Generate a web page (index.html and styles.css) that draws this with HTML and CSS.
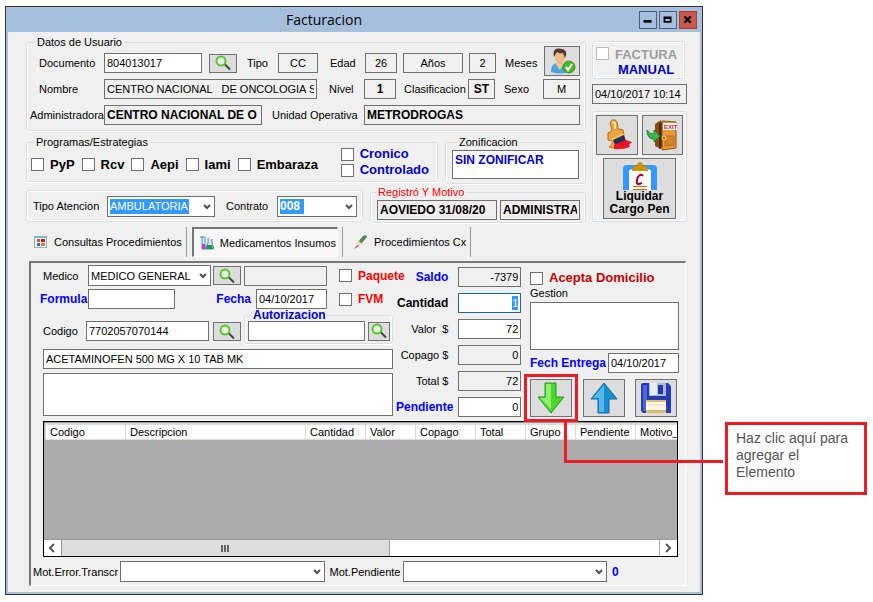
FILE: index.html
```html
<!DOCTYPE html>
<html lang="es">
<head>
<meta charset="utf-8">
<title>Facturacion</title>
<link rel="stylesheet" href="styles.css">
</head>
<body>
<svg class="defs" aria-hidden="true">
  <symbol id="lens" viewBox="0 0 18 16"><path d="M10.500 9L16 14.500" stroke="#444" stroke-width="2" fill="none"/><circle cx="7" cy="6" r="4.500" fill="#e6f3e2" stroke="#5bc236" stroke-width="2"/></symbol>
  <symbol id="chev" viewBox="0 0 8 6"><path d="M1 1L4 4L7 1" fill="none" stroke="#505050" stroke-width="2"/></symbol>
</svg>
<div class="stage">
  <main class="window">
    <header class="titlebar">
      <h1>Facturacion</h1>
      <div class="winbtns">
        <button type="button" aria-label="Minimizar"><svg viewBox="0 0 18 18"><path d="M4 9h9v3H4z"/></svg></button>
        <button type="button" aria-label="Maximizar"><svg viewBox="0 0 18 18"><path d="M4 5h9v7H4zM6 8v2h5V8z" fill-rule="evenodd"/></svg></button>
        <button type="button" class="close" aria-label="Cerrar"><svg viewBox="0 0 18 18"><path d="M5 5l7 7M12 5l-7 7" stroke="#000" stroke-width="2.500"/></svg></button>
      </div>
    </header>
    <div class="content">
      <div class="top">
        <div class="left">
          <fieldset class="user">
            <legend>Datos de Usuario</legend>
            <div class="row">
              <label class="w-main" for="doc">Documento</label><input id="doc" class="w-doc" value="804013017">
              <button type="button" class="find" aria-label="Buscar documento"><svg><use href="#lens"/></svg></button>
              <label class="w-tipo" for="tipo">Tipo</label><input id="tipo" class="ro center grow" value="CC" readonly>
              <label class="w-edad" for="edad">Edad</label><input id="edad" class="ro center w-small" value="26" readonly>
              <input class="ro center w-anos" aria-label="Unidad de edad" value="Años" readonly>
              <input id="meses" class="ro center w-mes" value="2" readonly><label class="w-meses" for="meses">Meses</label>
              <button type="button" class="person" aria-label="Usuario"><svg viewBox="0 0 28 28"><path d="M3 25c0-7 3-9 8-9s9 2 9 9q-8 3-17 0z" fill="#49a3dc"/><path d="M9 15h5l1 3-3 5-4-5z" fill="#f4c796"/><ellipse cx="12" cy="10" rx="5" ry="7" fill="#edb98a"/><path d="M6 10C4 1 10 1 14 2c5 1 5 5 3 9l-2-5q-3 1-6-1z" fill="#51382e"/><circle cx="21" cy="20" r="6" fill="#4cb526" stroke="#3a961c"/><path d="M18 20l2 3 4-6" fill="none" stroke="#fff" stroke-width="2"/></svg></button>
            </div>
            <div class="row">
              <label class="w-main" for="nom">Nombre</label><input id="nom" class="ro grow" value="CENTRO NACIONAL   DE ONCOLOGIA SA" readonly>
              <label class="w-edad" for="nivel">Nivel</label><input id="nivel" class="ro center b w-small" value="1" readonly>
              <label class="w-clas" for="clas">Clasificacion</label><input id="clas" class="ro center b w-mes" value="ST" readonly>
              <label class="w-meses" for="sexo">Sexo</label><input id="sexo" class="ro center w-sexo" value="M" readonly>
            </div>
            <div class="row">
              <label class="w-adm" for="adm">Administradora</label><input id="adm" class="ro b w-admin" value="CENTRO NACIONAL DE O" readonly>
              <label class="w-uni" for="uni">Unidad Operativa</label><input id="uni" class="ro b grow" value="METRODROGAS" readonly>
            </div>
          </fieldset>
          <div class="pair">
            <fieldset class="programs grow">
              <legend>Programas/Estrategias</legend>
              <div class="checks">
                <label><input type="checkbox">PyP</label>
                <label><input type="checkbox">Rcv</label>
                <label><input type="checkbox">Aepi</label>
                <label><input type="checkbox">Iami</label>
                <label><input type="checkbox">Embaraza</label>
              </div>
              <div class="stack navy">
                <label><input type="checkbox">Cronico</label>
                <label><input type="checkbox">Controlado</label>
              </div>
            </fieldset>
            <fieldset class="zone">
              <legend>Zonificacion</legend>
              <textarea class="navy b" aria-label="Zonificacion">SIN ZONIFICAR</textarea>
            </fieldset>
          </div>
          <div class="pair low">
            <div class="box attention grow">
              <label class="w-aten" for="aten">Tipo Atencion</label>
              <span class="sel grow"><select id="aten" class="hl"><option>AMBULATORIA</option></select><svg><use href="#chev"/></svg></span>
              <label class="w-cont" for="cont">Contrato</label>
              <span class="sel w-contrato"><select id="cont" class="hl short b"><option>008</option></select><svg><use href="#chev"/></svg></span>
            </div>
            <fieldset class="registry">
              <legend>Registró Y Motivo</legend>
              <div class="row">
                <input class="ro pink b grow" aria-label="Registró" value="AOVIEDO 31/08/20" readonly>
                <input class="ro pink b w-motivo" aria-label="Motivo" value="ADMINISTRADOR" readonly>
              </div>
            </fieldset>
          </div>
        </div>
        <aside class="side">
          <div class="box manual">
            <input type="checkbox" id="manual" disabled>
            <label for="manual"><span class="dim">FACTURA</span><span class="navy">MANUAL</span></label>
          </div>
          <input class="ro stamp" aria-label="Fecha y hora" value="04/10/2017 10:14" readonly>
          <div class="box tools">
            <button type="button" aria-label="Limpiar"><svg viewBox="0 0 32 32"><path d="M8 28q4-3 4-7l6-1 6 4q-5 5-9 4-3 2-7 0z" fill="#f0a43c" stroke="#c47a17"/><path d="M9 4q1-4 5-3 3 1 3 9l5 1 1 5-12 6-4-1V14q4-1 4-3z" fill="#f0a43c" stroke="#b66a12"/><path d="M11 4q2-2 3 0v6" stroke="#ffe0a0" fill="none" stroke-width="2"/><path d="M10 20l12-6 2 3-12 6z" fill="#e9c75b"/><path d="M12 21l11-5 2 6-11 4z" fill="#2c2b55"/><path d="M13 26l12-5 6 2-3 3 1 2q-8 3-16 2z" fill="#e8152a"/></svg></button>
            <button type="button" aria-label="Salir"><svg viewBox="0 0 32 32"><path d="M9 5l6-4v29l-6-3z" fill="#8a4b0f"/><path d="M13 5l4-3v26l-4 2z" fill="#4c2a0b"/><path d="M16 2l14 1v26l-14 2z" fill="#e69a37" stroke="#93530e"/><path d="M19 17h9v9l-9 1z" fill="#d4842b" stroke="#b96d1d"/><path d="M17 4h14v7H17z" fill="#fff"/><text x="18" y="10" font-size="6" font-weight="700" font-family="Liberation Sans, sans-serif" fill="#e00d1b" aria-hidden="true">EXIT</text><circle cx="18" cy="19" r="2" fill="#bc6a16" stroke="#fbd28a"/><path d="M1 11q3 5 7 4v-4l6 6-6 6v-3q-7 0-7-9z" fill="#3db54a" stroke="#208431"/></svg></button>
            <button type="button" class="settle"><svg viewBox="0 0 36 28"><path d="M1 28V7q0-4 4-4h26q4 0 4 4v21h-6V8H7v20z" fill="#3597ff"/><path d="M7 28V10q0-3 4-3h14q4 0 4 3v18z" fill="#fff"/><path d="M10 9q0-5 5-5 0-4 3-4t3 4q5 0 5 5z" fill="#cf9500"/><path d="M21 14q-2-3-5 1-3 7 1 7l3-1" fill="none" stroke="#a00024" stroke-width="2"/><path d="M11 24.500h14M11 27.500h14" stroke="#cf6a10"/></svg><span>Liquidar<br>Cargo Pen</span></button>
          </div>
        </aside>
      </div>
      <nav class="tabs">
        <button type="button"><svg viewBox="0 0 14 14"><path d="M0 1h13v12H0z" fill="#7fb6cc"/><path d="M1 3h11v9H1z" fill="#fff"/><path d="M3 4h3v3H3z" fill="#dc4b39"/><path d="M7 4h4v3H7z" fill="#c0192d"/><path d="M3 8h3v3H3z" fill="#2f6bad"/><path d="M7 8h4v3H7z" fill="#ef7440"/></svg>Consultas Procedimientos</button>
        <button type="button" class="active"><svg viewBox="0 0 14 14"><path d="M0 1h5M2 1v12h3V1" fill="#eaf4ff" stroke="#3787dd"/><path d="M2 8h3v5H2z" fill="#c83ac9"/><path d="M8 2v5l-3 6h9l-2-6V3" fill="#cde4fb" stroke="#6d83b2"/><path d="M7 9h5l1 4H6z" fill="#159b4a"/></svg>Medicamentos Insumos</button>
        <button type="button"><svg viewBox="0 0 14 14"><path d="M9 1q4-2 4 1L7 9 4 7z" fill="#4c8d50"/><path d="M5 6l3 3-3 2-2-2z" fill="#f0d5b2"/><path d="M0 14l3-4 2 1z" fill="#e9493e"/></svg>Procedimientos Cx</button>
      </nav>
      <section class="panel">
        <div class="form">
          <div class="entry">
            <div class="row">
              <label class="w-med" for="med">Medico</label>
              <span class="sel w-medico"><select id="med"><option>MEDICO GENERAL</option></select><svg><use href="#chev"/></svg></span>
              <button type="button" class="find" aria-label="Buscar medico"><svg><use href="#lens"/></svg></button>
              <input class="ro grow" aria-label="Nombre del medico" readonly>
              <label class="tick red"><input type="checkbox">Paquete</label>
            </div>
            <div class="row">
              <label class="w-med cap" for="form">Formula</label><input id="form" class="w-formula">
              <label class="w-fecha cap grow" for="fecha">Fecha</label><input id="fecha" class="w-date" value="04/10/2017">
              <label class="tick red"><input type="checkbox">FVM</label>
            </div>
            <div class="row code">
              <label class="w-cod" for="cod">Codigo</label><input id="cod" class="w-codigo" value="7702057070144">
              <button type="button" class="find" aria-label="Buscar codigo"><svg><use href="#lens"/></svg></button>
              <fieldset class="auth grow">
                <legend class="navy">Autorizacion</legend>
                <div class="row"><input class="grow" aria-label="Autorizacion"><button type="button" class="find slim" aria-label="Buscar autorizacion"><svg><use href="#lens"/></svg></button></div>
              </fieldset>
            </div>
            <input class="wide" aria-label="Descripcion" value="ACETAMINOFEN 500 MG X 10 TAB MK">
            <textarea class="notes" aria-label="Observaciones"></textarea>
          </div>
          <div class="amounts">
            <label class="cap" for="saldo">Saldo</label><input id="saldo" class="ro" value="-7379" readonly>
            <label class="cap black" for="cant">Cantidad</label><input id="cant" class="picked" value="1">
            <label for="valor">Valor&nbsp; $</label><input id="valor" value="72">
            <label for="copago">Copago $</label><input id="copago" class="ro" value="0" readonly>
            <label for="total">Total $</label><input id="total" class="ro" value="72" readonly>
            <label class="cap out" for="pend">Pendiente</label><input id="pend" value="0">
          </div>
          <div class="delivery">
            <label class="tick dark"><input type="checkbox">Acepta Domicilio</label>
            <label for="gest">Gestion</label>
            <textarea id="gest"></textarea>
            <div class="row"><label class="cap grow" for="entrega">Fech Entrega</label><input id="entrega" class="w-date" value="04/10/2017"></div>
            <div class="actions">
              <div class="target">
                <button type="button" aria-label="Agregar"><svg viewBox="0 0 32 34"><path d="M10 2h11v14h8L16 32 3 16h7z" fill="#48d72b" stroke="#27941a"/><path d="M11 3h5v25L5 17h6z" fill="#8cf06d"/></svg></button>
                <span class="link"></span>
              </div>
              <button type="button" aria-label="Quitar"><svg viewBox="0 0 32 34"><path d="M10 32h11V18h8L16 2 3 18h7z" fill="#168ed4" stroke="#1268a3"/><path d="M11 31h5V4L5 17h6z" fill="#55b9ed"/></svg></button>
              <button type="button" aria-label="Guardar"><svg viewBox="0 0 32 34"><path d="M1 4q0-2 2-2h25l3 3v27H3l-2-2z" fill="#233db4"/><path d="M3 4h4v26H3z" fill="#4968d8"/><path d="M9 2h17v13H9z" fill="#aeb8d0"/><path d="M10 2h7v12h-7z" fill="#e9edf7"/><path d="M18 4h5v9h-5z" fill="#263aa5"/><path d="M6 19h20v13H6z" fill="#fff8e8"/><path d="M6 19h20v2H6zM6 29h20v3H6z" fill="#e4b96c"/><path d="M8 24h16" stroke="#ddd3bd"/></svg></button>
            </div>
          </div>
        </div>
        <div class="gridview">
          <div class="cells">
            <table>
              <colgroup><col class="c80"><col class="c180"><col class="c60"><col class="c50"><col class="c60"><col class="c50"><col class="c50"><col class="c60"><col></colgroup>
              <thead><tr><th>Codigo</th><th>Descripcion</th><th>Cantidad</th><th>Valor</th><th>Copago</th><th>Total</th><th>Grupo</th><th>Pendiente</th><th>Motivo_</th></tr></thead>
            </table>
          </div>
          <div class="scroll">
            <button type="button" aria-label="Izquierda"><svg viewBox="0 0 16 16"><path d="M10 4L6 8l4 4" fill="none" stroke="#555" stroke-width="2"/></svg></button>
            <div class="track"><div class="thumb"><i></i><i></i><i></i></div></div>
            <button type="button" aria-label="Derecha"><svg viewBox="0 0 16 16"><path d="M6 4l4 4-4 4" fill="none" stroke="#555" stroke-width="2"/></svg></button>
          </div>
        </div>
        <div class="row reasons">
          <label class="w-err" for="err">Mot.Error.Transcr</label>
          <span class="sel grow"><select id="err"><option></option></select><svg><use href="#chev"/></svg></span>
          <label class="w-mot" for="mot">Mot.Pendiente</label>
          <span class="sel grow"><select id="mot"><option></option></select><svg><use href="#chev"/></svg></span>
          <output class="count">0</output>
        </div>
      </section>
    </div>
  </main>
  <p class="callout">Haz clic aquí para agregar el Elemento</p>
</div>
</body>
</html>
```
FILE: styles.css
```css
* { box-sizing: border-box; }
body { margin: 0; background: #fff; color: #000; font: 11px/14px "Liberation Sans", sans-serif; }
.defs { display: none; }
.stage { display: grid; grid-template-columns: minmax(0, 1fr) 142px; gap: 22px; align-items: start; padding: 6px 6px 7px 5px; }

.window { min-width: 0; background: #f0f0f0; border: 1px solid #333; box-shadow: inset 0 0 0 2px #a6bfdd; padding: 0 2px 2px; }
.titlebar { display: flex; align-items: center; height: 25px; margin: 0 -2px; padding: 0 5px 0 3px; background: #a6bfdd; }
h1 { flex: 1; margin: 0; text-align: center; font: 14px/24px "Open Sans", sans-serif; }
.winbtns { display: flex; gap: 2px; }
.winbtns button { width: 18px; height: 18px; padding: 0; background: #a6bfdd; border: 1px solid #4c5f7a; }
.winbtns .close { background: #c75a4b; border-color: #a34237; }
.winbtns svg { display: block; width: 16px; height: 16px; }

.content { padding: 4px 13px 6px 18px; }
.top { display: grid; grid-template-columns: minmax(0, 1fr) 95px; gap: 6px; }
.row { display: flex; align-items: center; }
.grow { flex: 1; min-width: 0; }
label { white-space: nowrap; flex: none; }
label.grow { flex: 1; }

input, textarea, select { font: inherit; color: #000; background: #fff; border: 1px solid #707070; border-radius: 0; margin: 0; outline: 0; }
input { height: 20px; padding: 0 2px; min-width: 0; }
textarea { display: block; width: 100%; resize: none; padding: 3px; overflow: hidden; }
.ro { background: #f0f0f0; }
.pink { background: #f2eeee; }
.center { text-align: center; }
.b { font-weight: 700; font-size: 12px; }
input[type="checkbox"] { appearance: none; flex: none; width: 13px; height: 13px; padding: 0; background: #fff; border: 1px solid #707070; }
button { font: inherit; color: #000; background: #ddd; border: 1px solid #707070; border-radius: 0; padding: 0; flex: none; }
.find { width: 28px; height: 19px; }
.find svg { display: block; width: 18px; height: 16px; margin: 0 auto; }
.slim { width: 22px; }

.sel { position: relative; display: block; height: 21px; }
.sel select { display: block; appearance: none; width: 100%; height: 100%; padding: 0 18px 0 2px; }
.sel svg { position: absolute; right: 4px; top: 8px; width: 8px; height: 6px; pointer-events: none; }
select.hl { color: #fff; background: linear-gradient(#3399ff, #3399ff) 2px 2px / 79px 15px no-repeat #fff; }
select.short { background-size: 24px 15px; }

fieldset { min-width: 0; margin: 0; padding: 0; border: 1px solid #d5dfe5; border-radius: 3px; box-shadow: inset 1px 0 #fff, inset -1px 0 #fff, 0 1px #fff; }
legend { margin-left: 5px; padding: 0 2px; line-height: 12px; }
.box { border: 1px solid #d5dfe5; border-radius: 3px; box-shadow: inset 0 0 0 1px #fff; }
.navy { color: #0000c8; }

.user { padding: 5px 5px 5px 3px; }
.user .row + .row { margin-top: 6px; }
.w-main { width: 74px; padding-left: 9px; }
.w-adm { width: 74px; }
.w-doc { width: 98px; margin-right: 7px; }
.w-tipo { width: 41px; padding-left: 10px; }
.w-edad { width: 47px; padding-left: 12px; }
.w-small { width: 32px; }
.w-anos { width: 60px; margin: 0 6px; }
.w-mes { width: 27px; }
.w-meses { width: 48px; padding-left: 9px; }
.person { width: 36px; height: 30px; margin: -7px 0 -3px; }
.person svg { display: block; width: 28px; height: 28px; margin: auto; }
.w-clas { width: 72px; padding-left: 8px; }
.w-sexo { width: 37px; }
.w-admin { width: 158px; }
.w-uni { width: 102px; padding-left: 10px; }

.pair { display: flex; align-items: start; gap: 7px; margin-top: 5px; }
.programs { display: flex; align-items: center; justify-content: space-between; height: 46px; padding: 0 8px 0 4px; }
.programs legend { margin-left: 3px; }
.checks { display: flex; gap: 7px; }
.checks label, .stack label, .tick { display: flex; align-items: center; gap: 6px; font: bold 13px/16px "Liberation Sans", sans-serif; }
.stack { margin-top: -5px; }
.zone { width: 141px; height: 48px; padding: 2px 6px; }
.zone textarea { height: 29px; padding: 2px; line-height: 14px; }
.low { margin-top: 2px; }
.attention { display: flex; align-items: center; height: 32px; margin-top: 4px; padding: 0 5px 0 6px; }
.w-aten { width: 74px; }
.w-cont { width: 62px; padding-left: 11px; }
.w-contrato { width: 80px; }
.registry { width: 216px; padding: 2px 5px 2px 6px; }
.registry legend { color: #f00; margin-left: -1px; }
.registry .row { gap: 3px; }
.w-motivo { width: 80px; }

.side { display: flex; flex-direction: column; padding-top: 5px; }
.manual { display: flex; gap: 6px; height: 38px; padding: 5px 3px; margin-right: 2px; font: bold 13px/15px "Liberation Sans", sans-serif; }
.manual span { display: block; text-align: center; }
.dim { color: #9d9d9d; }
.manual input { border-color: #bbb; }
.stamp { width: 100%; margin: 5px 0 7px; }
.tools { display: grid; grid-template-columns: 1fr 1fr; gap: 3px 4px; padding: 3px 3px 2px; }
.tools button { height: 40px; }
.tools svg { display: block; width: 32px; height: 32px; margin: auto; }
.tools .settle { grid-column: 1 / -1; justify-self: center; width: 73px; height: 61px; font: bold 12px/13px "Liberation Sans", sans-serif; }
.tools .settle svg { width: 36px; height: 28px; }

.tabs { display: flex; gap: 5px; height: 30px; margin: 4px 0 4px 2px; }
.tabs button { display: flex; align-items: center; gap: 6px; background: none; border: 0; padding: 0 4px 0 6px; border-right: 1px solid #999; }
.tabs svg { width: 14px; height: 14px; }
.tabs .active { position: relative; padding: 0 1px 0 6px; margin-right: 5px; background: #f8f8f8; border: 1px solid #777; border-width: 2px 1px 1px 2px; border-color: #777 #fff #fff #777; }
.tabs .active::after { content: ""; position: absolute; right: -6px; top: -2px; bottom: -1px; width: 1px; background: #999; }

.panel { margin: 0 1px 0 3px; padding: 2px 6px 3px 3px; border: 1px solid #666; border-width: 2px 1px 1px 2px; border-color: #777 #fff #fff #777; }
.form { display: grid; grid-template-columns: minmax(0, 1fr) 125px 155px; column-gap: 3px; padding-left: 9px; align-items: start; }
.cap { color: #00f; font: bold 12px/14px "Liberation Sans", sans-serif; }
.black { color: #000; }
.red { color: #f00; font-size: 12px; }
.dark { color: #c00000; }
.entry .row .sel { margin-right: 2px; }
.entry .row .find + input { margin-left: 3px; }
.w-med { width: 45px; }
.w-med.cap { margin-left: -3px; width: 48px; }
.w-medico { width: 123px; }
.entry .tick { width: 66px; padding-left: 12px; }
.w-formula { width: 87px; }
.w-fecha { text-align: right; padding-right: 5px; }
.w-date { width: 71px; }
.entry > .row + .row { margin-top: 3px; }
.entry > .row.code { align-items: end; margin-top: 0; }
.w-cod { width: 43px; line-height: 20px; }
.w-codigo { width: 123px; margin-right: 4px; }
.auth { margin: 0 0 -3px 3px; padding: 0 2px 2px 3px; }
.auth legend { font: bold 12px/12px "Liberation Sans", sans-serif; margin-left: 3px; }
.auth .row { gap: 3px; }
.wide { display: block; width: 100%; margin: 8px 0 4px; }
.notes { height: 43px; }
.amounts { display: grid; grid-template-columns: 1fr 63px; gap: 6px 10px; align-items: center; padding-top: 2px; text-align: right; }
.amounts input { text-align: right; }
.amounts .out { margin-right: -5px; }
.picked { color: #fff; border-color: #2a6496; background: linear-gradient(#3399ff, #3399ff) right 2px top 2px / 6px 14px no-repeat #fff; }
.delivery { padding: 5px 0 0 6px; }
.delivery > label { display: flex; }
.delivery textarea { height: 48px; margin: 2px 0 3px; }
.actions { display: flex; justify-content: space-between; margin: 6px 2px 0 0; }
.actions button { display: block; width: 42px; height: 38px; }
.actions svg { display: block; width: 32px; height: 34px; margin: auto; }
.target { position: relative; }
.target::before { content: ""; position: absolute; inset: -5px -6px; border: 3px solid #ed1c24; z-index: 2; }
.link { position: absolute; left: 34px; top: 42px; width: 159px; height: 42px; border: solid #ed1c24; border-width: 0 0 3px 3px; z-index: 2; }

.gridview { margin: 4px 1px 0 9px; border: 1px solid #000; background: #ababab; }
.cells { height: 117px; padding-left: 1px; overflow: hidden; border-top: 1px solid #999; }
table { width: 100%; table-layout: fixed; border-collapse: separate; border-spacing: 0; }
th { height: 17px; padding: 0 4px; text-align: left; font-weight: 400; white-space: nowrap; line-height: 14px; background: #fff; border: solid #ddd; border-width: 2px 0 1px 1px; }
th:last-child { padding-right: 0; }
.c50 { width: 50px; } .c60 { width: 60px; } .c80 { width: 80px; } .c180 { width: 180px; }
.scroll { display: flex; height: 17px; border-top: 1px solid #999; background: #fff; }
.scroll button { width: 17px; height: 16px; background: #fff; border: 0; }
.scroll button svg { display: block; width: 16px; height: 16px; }
.track { flex: 1; border-right: 1px solid #aaa; }
.thumb { display: flex; align-items: center; justify-content: center; gap: 1px; width: 55%; height: 16px; background: #ddd; border: solid #999; border-width: 0 1px; }
.thumb i { width: 2px; height: 7px; background: #666; }

.reasons { margin-top: 4px; }
.w-err { width: 87px; margin-left: -1px; }
.w-mot { width: 78px; padding-left: 5px; }
.count { flex: none; width: 72px; padding-left: 5px; color: #00f; font-weight: 700; font-size: 12px; }

.callout { margin: 416px 0 0; min-height: 73px; padding: 5px 8px; border: 3px solid #ed1c24; color: #555; font-size: 14px; line-height: 17px; }
```
